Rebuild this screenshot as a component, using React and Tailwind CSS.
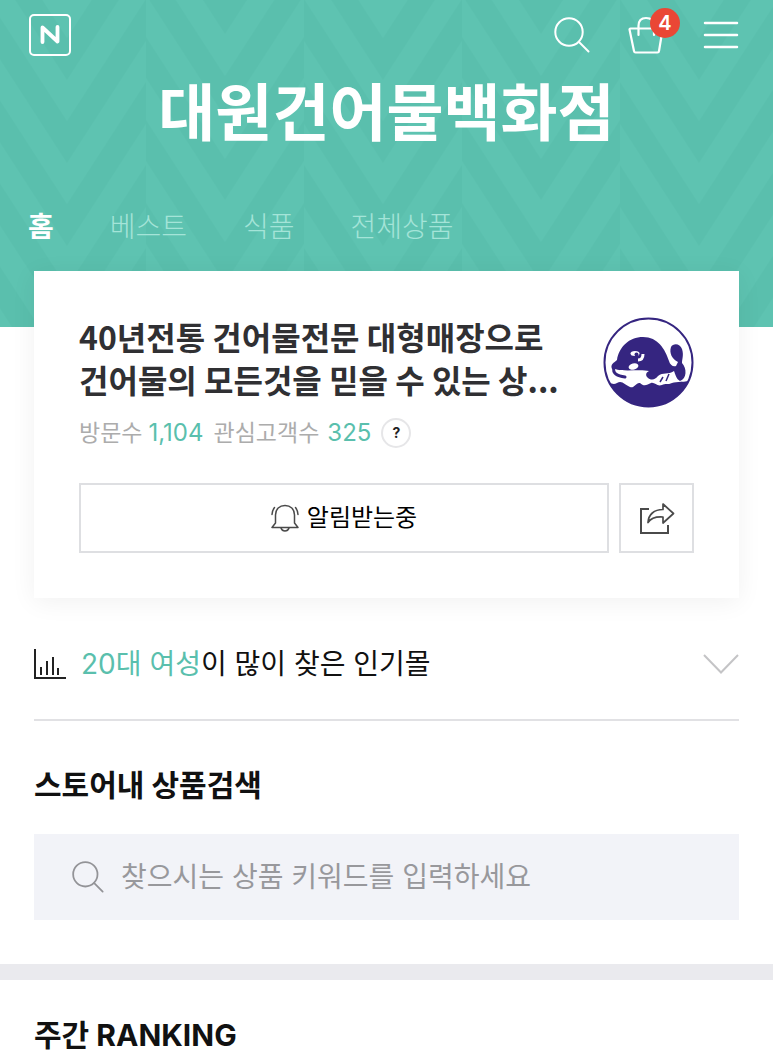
import { useState } from "react";

const navItems = [
    { id: "home", label: "홈" },
    { id: "best", label: "베스트" },
    { id: "food", label: "식품" },
    { id: "all", label: "전체상품" },
];

// vertical repeats of one chevron inside the pattern tile
const repeats = [-83, 0, 83, 166];

const HeaderPattern = () => (
    <svg className="absolute inset-0 w-full h-full" aria-hidden="true">
        <defs>
            <pattern id="chevrons" width="316" height="83" patternUnits="userSpaceOnUse" patternTransform="translate(-12 0)">
                {repeats.map(y => (
                    <g key={y} fill="#5ec3b1">
                        <path d={`M0 ${y - 42}L79 ${y + 80}L158 ${y - 42}V${y - 1}L79 ${y + 121}L0 ${y - 1}Z`} />
                        <path d={`M158 ${y - 5}L237 ${y + 117}L316 ${y - 5}V${y + 37}L237 ${y + 159}L158 ${y + 37}Z`} />
                    </g>
                ))}
            </pattern>
        </defs>
        <rect width="100%" height="100%" fill="url(#chevrons)" />
    </svg>
);

const NaverIcon = () => (
    <svg viewBox="0 0 42 42" className="w-[42px] h-[42px]" fill="none" stroke="white" aria-hidden="true">
        <rect x="1" y="1" width="40" height="40" rx="4" strokeWidth="2" />
        <path d="M13.500 28V13.500L28.500 27.500V13" strokeWidth="3.800" strokeLinejoin="round" strokeLinecap="round" />
    </svg>
);

const SearchIcon = ({ className, strokeWidth }) => (
    <svg viewBox="0 0 36 36" className={className} fill="none" stroke="currentColor" strokeWidth={strokeWidth} strokeLinecap="round" aria-hidden="true">
        <circle cx="15" cy="15" r="13.700" />
        <path d="M25 25L34.500 34.500" />
    </svg>
);

const BasketIcon = () => (
    <svg viewBox="0 0 36 38" className="w-[36px] h-[38px]" fill="none" stroke="white" strokeWidth="2.200" strokeLinecap="round" strokeLinejoin="round" aria-hidden="true">
        <path d="M1.500 13.500Q1.500 12.500 2.500 12.500H33Q34.500 12.500 34.500 14L31 35Q30.800 36.500 29.500 36.500H7.500Q6.300 36.500 6 35Z" />
        <path d="M10.500 19V10Q10.500 2 18 2Q26 2 26 10V19" />
    </svg>
);

const MenuIcon = () => (
    <svg viewBox="0 0 36 28" className="w-[36px] h-[28px]" stroke="white" strokeWidth="2.500" strokeLinecap="round" aria-hidden="true">
        <path d="M2 2H34M2 14H34M2 26H34" />
    </svg>
);

const BellIcon = () => (
    <svg viewBox="0 0 28 28" className="w-[28px] h-[28px]" fill="none" stroke="#4a4a4a" strokeWidth="1.500" strokeLinecap="round" strokeLinejoin="round" aria-hidden="true">
        <path d="M1 23.500H27L23.500 19V11C23.500 5 19.500 1.500 14 1.500S4.500 5 4.500 11V19Z" />
        <path d="M10 24Q11 27 14 27T18 24" />
        <path d="M3.500 3.500Q1.200 6.500 1 10.500M24.500 3.500Q26.800 6.500 27 10.500" />
    </svg>
);

const ShareIcon = () => (
    <svg viewBox="0 0 36 32" className="w-[36px] h-[32px]" fill="none" stroke="#4a4a4a" strokeWidth="2" aria-hidden="true">
        <path d="M10 7H2V31H29V23" />
        <path d="M24 2L34.500 11.500L24 21V15C17 14.500 12 16 9 20.500C9.500 12.500 15 7.500 24 7.500Z" strokeWidth="1.700" strokeLinejoin="round" />
    </svg>
);

const ChartIcon = () => (
    <svg viewBox="0 0 32 32" className="w-[32px] h-[32px]" fill="none" stroke="#222" strokeWidth="2" aria-hidden="true">
        <path d="M1 1V30H32" />
        <path d="M7 19V27M13 13V27M19 9V27M24 20V27" />
    </svg>
);

const StoreLogo = () => (
    <svg viewBox="0 0 91 91" className="mt-0.5 w-[91px] h-[91px]" role="img" aria-label="대원건어물백화점 로고">
        <defs>
            <clipPath id="logoCircle"><circle cx="45.500" cy="45.500" r="44" /></clipPath>
        </defs>
        <circle cx="45.500" cy="45.500" r="44" fill="white" />
        <g clipPath="url(#logoCircle)" fill="#352580">
            <path d="M0 64C6 64 9 69 14 66C19 63 22 68 27 70C31 72 33 65 37 66C41 70 44 68 48 66C52 65 54 70 59 68C62 66 65 68 69 66C74 64 82 66 91 62V91H0Z" />
            <path d="M9 52C7 47 11 46 14 43C16 30 26 20 40 20C55 20 62 32 66 44C67 48 70 50 73 49L75 45C69 42 66 36 68 30C70 26 77 26 79 32C81 38 79 42 79 46C84 51 84 62 77 64C73 62 72 56 71 54C65 58 60 55 55 59C52 63 48 64 44 60C42 57 44 55 46 54C38 52 20 55 12 52Z" />
            <path d="M11 50C9 57 15 59 22 60" fill="none" stroke="#352580" strokeWidth="3" strokeLinecap="round" />
            <path d="M66 57L63 64M60 60L57 65" fill="none" stroke="#352580" strokeWidth="1.500" />
        </g>
        <ellipse cx="32" cy="36.500" rx="4.500" ry="2.500" fill="white" />
        <path d="M35 43Q40 43 40 37" stroke="white" strokeWidth="3" fill="none" />
        <circle cx="33.500" cy="37.500" r="2" fill="#352580" />
        <ellipse cx="30.500" cy="49.500" rx="5" ry="3" fill="white" transform="rotate(-15 30.500 49.500)" />
        <circle cx="45.500" cy="45.500" r="44" fill="none" stroke="#352580" strokeWidth="2" />
    </svg>
);

const Header = () => {
    const [active, setActive] = useState("home");

    return (
        <header className="relative bg-[#5abfad] pb-20 text-white">
            <HeaderPattern />
            <div className="relative">
                <div className="flex items-center justify-between pt-3.5 pl-[29px] pr-[34px]">
                    <a href="#naver" aria-label="네이버"><NaverIcon /></a>
                    <div className="flex items-center">
                        <button type="button" aria-label="검색" className="mr-[38px]">
                            <SearchIcon className="w-[36px] h-[36px]" strokeWidth={2} />
                        </button>
                        <button type="button" aria-label="장바구니" className="relative mr-[39px]">
                            <BasketIcon />
                            <span className="absolute -top-2 -right-4 w-[30px] h-[30px] rounded-full bg-[#ea4735] text-xl leading-[30px] font-semibold text-center">4</span>
                        </button>
                        <button type="button" aria-label="메뉴"><MenuIcon /></button>
                    </div>
                </div>
                <h1 className="mt-5 text-center text-[62px] leading-[76px] font-bold">대원건어물백화점</h1>
                <nav className="mt-[55px] pl-7 flex gap-14 text-[28px] leading-10">
                    {navItems.map(item => (
                        <a
                            key={item.id}
                            href={`#${item.id}`}
                            onClick={() => setActive(item.id)}
                            className={active === item.id ? "font-bold" : "font-light text-[#a4e4d8]"}
                        >
                            {item.label}
                        </a>
                    ))}
                </nav>
            </div>
        </header>
    );
};

const StoreCard = () => (
    <section className="relative -mt-14 mx-[34px] px-[45px] pt-11 pb-[45px] bg-white shadow-[0_4px_24px_rgba(0,0,0,0.06)]">
        <div className="flex justify-between">
            <div>
                <h2 className="font-['Noto_Sans_CJK_KR',sans-serif] text-[32px] leading-[43px] font-bold text-[#303033]">
                    40년전통 건어물전문 대형매장으로
                    <br />
                    건어물의 모든것을 믿을 수 있는 상...
                </h2>
                <div className="mt-4 flex items-center text-[23px] leading-[30px] text-[#acacac]">
                    <span>방문수</span>
                    <span className="ml-1.5 text-2xl text-[#5abfad]">1,104</span>
                    <span className="ml-2.5">관심고객수</span>
                    <span className="ml-2 text-2xl text-[#5abfad]">325</span>
                    <button type="button" aria-label="도움말" className="ml-2.5 w-[30px] h-[30px] rounded-full border-2 border-[#e6e6e8] text-sm leading-none font-bold text-[#222]">?</button>
                </div>
            </div>
            <StoreLogo />
        </div>
        <div className="mt-[34px] flex gap-[10px]">
            <button type="button" className="flex-1 h-[70px] flex items-center justify-center gap-2 border-2 border-[#dedfe2] text-2xl text-black">
                <BellIcon />
                알림받는중
            </button>
            <button type="button" aria-label="공유하기" className="w-[75px] h-[70px] flex items-center justify-center border-2 border-[#dedfe2]">
                <ShareIcon />
            </button>
        </div>
    </section>
);

const App = () => {
    const [keyword, setKeyword] = useState("");

    return (
        <div className="bg-white font-['Inter','Noto_Sans_CJK_KR',sans-serif] text-[#111]">
            <Header />
            <main>
                <StoreCard />

                {/* 인기몰 */}
                <button type="button" className="mx-[34px] w-[calc(100%-68px)] pt-[46px] pb-[35px] flex items-center border-b-2 border-[#e1e1e4] text-left text-[28px] leading-10">
                    <ChartIcon />
                    <span className="ml-[15px] flex-1">
                        <span className="text-[#5abfad]">20대 여성</span>이 많이 찾은 인기몰
                    </span>
                    <svg viewBox="0 0 36 20" className="w-[36px] h-[20px]" fill="none" stroke="#c4c4c6" strokeWidth="2" aria-hidden="true">
                        <path d="M1 1L18 18.500L35 1" />
                    </svg>
                </button>

                {/* 상품검색 */}
                <section className="px-[34px] pt-11 pb-11">
                    <label htmlFor="keyword" className="block text-[30px] leading-10 font-bold">스토어내 상품검색</label>
                    <div className="mt-[29px] h-[86px] pl-[38px] pr-4 flex items-center bg-[#f2f3f8]">
                        <SearchIcon className="w-[32px] h-[32px] text-[#939397]" strokeWidth={2} />
                        <input
                            id="keyword"
                            type="text"
                            value={keyword}
                            onChange={e => setKeyword(e.target.value)}
                            placeholder="찾으시는 상품 키워드를 입력하세요"
                            className="ml-[17px] flex-1 min-w-0 bg-transparent text-[28px] leading-10 outline-none placeholder:text-[#98989c]"
                        />
                    </div>
                </section>

                <div className="h-4 bg-[#eaeaee]" />

                <section className="px-[34px] pt-[35px] pb-2">
                    <h2 className="text-[30px] leading-10 font-bold">주간 RANKING</h2>
                </section>
            </main>
        </div>
    );
};

export default App;
